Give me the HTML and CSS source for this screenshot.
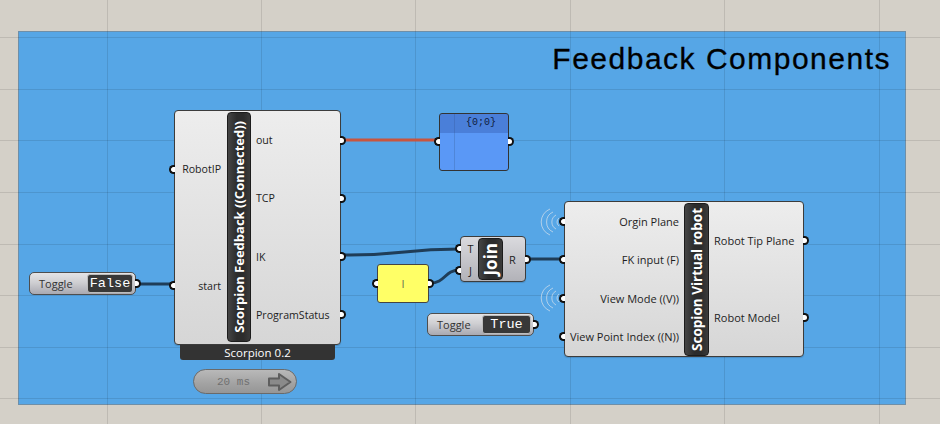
FILE: index.html
```html
<!DOCTYPE html>
<html>
<head>
<meta charset="utf-8">
<link rel="stylesheet" href="styles.css">
</head>
<body>
<div class="canvas">
  <div class="group"><div class="group-title">Feedback Components</div></div>

  <svg class="layer" width="940" height="424" viewBox="0 0 940 424">
    <g class="grid">
      <line x1="107.5" y1="0" x2="107.5" y2="424"/>
      <line x1="261.5" y1="0" x2="261.5" y2="424"/>
      <line x1="415.5" y1="0" x2="415.5" y2="424"/>
      <line x1="570.5" y1="0" x2="570.5" y2="424"/>
      <line x1="724.5" y1="0" x2="724.5" y2="424"/>
      <line x1="879.5" y1="0" x2="879.5" y2="424"/>
      <line x1="0" y1="37.5" x2="940" y2="37.5"/>
      <line x1="0" y1="89.5" x2="940" y2="89.5"/>
      <line x1="0" y1="140.5" x2="940" y2="140.5"/>
      <line x1="0" y1="192.5" x2="940" y2="192.5"/>
      <line x1="0" y1="244.5" x2="940" y2="244.5"/>
      <line x1="0" y1="295.5" x2="940" y2="295.5"/>
      <line x1="0" y1="347.5" x2="940" y2="347.5"/>
      <line x1="0" y1="398.5" x2="940" y2="398.5"/>
    </g>
    <g class="wires">
      <path class="wire red" d="M341 140 L439 140"/>
      <path class="wire" d="M137 284 L174 284"/>
      <path class="wire" d="M341 255 C400 256 400 249 460 249"/>
      <path class="wire" d="M430 283 C446 283 444 270 460 270"/>
      <path class="wire" d="M526 259 L564 259"/>
    </g>
    <g class="wireless">
      <path d="M559 218 A5 5 0 0 0 559 226"/>
      <path d="M556 215 A8 8 0 0 0 556 229"/>
      <path d="M553 212 A11 11 0 0 0 553 232"/>
      <path d="M550 209 A14 14 0 0 0 550 235"/>
      <path d="M559 294 A5 5 0 0 0 559 302"/>
      <path d="M556 291 A8 8 0 0 0 556 305"/>
      <path d="M553 288 A11 11 0 0 0 553 308"/>
      <path d="M550 285 A14 14 0 0 0 550 311"/>
    </g>
  </svg>

  <!-- Scorpion Feedback -->
  <div class="node feedback">
    <div class="comp comp-feedback">
      <div class="col inputs">
        <div class="port"><span>RobotIP</span><i class="grip"></i></div>
        <div class="port"><span>start</span><i class="grip"></i></div>
      </div>
      <div class="title"><span>Scorpion Feedback ((Connected))</span></div>
      <div class="col outputs">
        <div class="port"><span>out</span><i class="grip"></i></div>
        <div class="port"><span>TCP</span><i class="grip"></i></div>
        <div class="port"><span>IK</span><i class="grip"></i></div>
        <div class="port"><span>ProgramStatus</span><i class="grip"></i></div>
      </div>
    </div>
    <div class="footer">Scorpion 0.2</div>
  </div>

  <!-- Panel {0;0} -->
  <div class="node panel-blue">
    <div class="panel-head">{0;0}</div>
    <div class="panel-body"></div>
    <i class="grip grip-l"></i><i class="grip grip-r"></i>
  </div>

  <!-- Toggle False -->
  <div class="node toggle toggle-false">
    <span class="toggle-label">Toggle</span>
    <span class="toggle-value">False</span>
    <i class="grip grip-r"></i>
  </div>

  <!-- Yellow panel -->
  <div class="node panel-yellow">
    <span>l</span>
    <i class="grip grip-l"></i><i class="grip grip-r"></i>
  </div>

  <!-- Join -->
  <div class="node join">
    <div class="comp comp-join">
      <div class="col inputs">
        <div class="port"><span>T</span><i class="grip"></i></div>
        <div class="port"><span>J</span><i class="grip"></i></div>
      </div>
      <div class="title"><span>Join</span></div>
      <div class="col outputs">
        <div class="port"><span>R</span><i class="grip"></i></div>
      </div>
    </div>
  </div>

  <!-- Toggle True -->
  <div class="node toggle toggle-true">
    <span class="toggle-label">Toggle</span>
    <span class="toggle-value">True</span>
    <i class="grip grip-r"></i>
  </div>

  <!-- Virtual robot -->
  <div class="node robot">
    <div class="comp comp-robot">
      <div class="col inputs">
        <div class="port"><span>Orgin Plane</span><i class="grip"></i></div>
        <div class="port"><span>FK input (F)</span><i class="grip"></i></div>
        <div class="port"><span>View Mode ((V))</span><i class="grip"></i></div>
        <div class="port"><span>View Point Index ((N))</span><i class="grip"></i></div>
      </div>
      <div class="title"><span>Scopion Virtual robot</span></div>
      <div class="col outputs">
        <div class="port"><span>Robot Tip Plane</span><i class="grip"></i></div>
        <div class="port"><span>Robot Model</span><i class="grip"></i></div>
      </div>
    </div>
  </div>

  <!-- Timer -->
  <div class="node timer">
    <span class="timer-text">20 ms</span>
    <svg class="timer-arrow" width="26" height="20" viewBox="0 0 26 20">
      <path d="M2 6.5 H12 V2 L23.5 10 L12 18 V13.5 H2 Z" fill="#8a8a8a" stroke="#5e5e5e" stroke-width="2" stroke-linejoin="round"/>
    </svg>
  </div>
</div>
</body>
</html>
```

FILE: styles.css
```css
* { box-sizing: border-box; }
html, body { margin: 0; padding: 0; }
body { background: #d4d0c8; font-family: "Open Sans", "Noto Sans", sans-serif; }

.canvas {
  position: relative;
  width: 940px;
  height: 424px;
  overflow: hidden;
  background: #d4d0c8;
}

.group {
  position: absolute;
  left: 18px;
  top: 31px;
  width: 888px;
  height: 374px;
  background: #56a6e6;
  border: 1px solid #6f8fa8;
  padding: 10px 14px 0 0;
  display: flex;
  justify-content: flex-end;
  align-items: flex-start;
}
.group-title {
  font-family: "Liberation Sans", Arial, sans-serif;
  font-size: 30px;
  line-height: 34px;
  letter-spacing: 1.5px;
  color: #000;
  -webkit-text-stroke: 0.3px #000;
}

.layer { position: absolute; left: 0; top: 0; }
.grid line { stroke: rgba(0, 0, 0, 0.1); stroke-width: 1; }
.wire { fill: none; stroke: #1f3d58; stroke-width: 3; }
.wire.red { stroke: #c8553f; }
.wireless path { fill: none; stroke: rgba(215, 225, 235, 0.7); stroke-width: 1; }

.node { position: absolute; }

.grip {
  position: absolute;
  width: 6px;
  height: 9px;
  background: #fff;
  border: 2px solid #111;
  top: 50%;
  margin-top: -4.5px;
  z-index: 2;
}
.inputs .grip, .grip-l {
  left: -6px;
  border-right: 0;
  border-radius: 5px 0 0 5px;
}
.outputs .grip, .grip-r {
  right: -6px;
  border-left: 0;
  border-radius: 0 5px 5px 0;
}

/* Components */
.comp {
  display: grid;
  border: 1px solid #3c3c3c;
  border-radius: 4px;
  background: linear-gradient(#ededed, #d6d6d6);
  box-shadow: 0 1px 1px rgba(0, 0, 0, 0.15);
  font-size: 10.8px;
  color: #1e1e1e;
}
.col { display: flex; flex-direction: column; }
.port {
  flex: 1;
  display: flex;
  align-items: center;
  position: relative;
  white-space: nowrap;
}
.inputs .port { justify-content: flex-end; padding-right: 5px; }
.outputs .port { padding-left: 5px; }

.title {
  background: linear-gradient(90deg, #454545, #2c2c2c 40%, #2c2c2c 70%, #3a3a3a);
  border: 1px solid #1c1c1c;
  border-radius: 4px;
  display: flex;
  align-items: center;
  justify-content: center;
  overflow: hidden;
}
.title span {
  writing-mode: vertical-rl;
  transform: rotate(180deg);
  color: #fff;
  font-weight: 700;
  white-space: nowrap;
}

.feedback { left: 174px; top: 110px; width: 167px; }
.comp-feedback {
  height: 235px;
  grid-template-columns: 52px 24px 1fr;
  font-size: 10.6px;
}
.comp-feedback .title { margin: 1px 0 2px; }
.comp-feedback .title span { font-size: 13px; }
.comp-feedback .inputs .port { padding-right: 6px; }

.footer {
  margin: 0 6px;
  height: 15px;
  background: #333;
  color: #fff;
  font-size: 11.5px;
  line-height: 15px;
  text-align: center;
  border-radius: 0 0 3px 3px;
}

.robot { left: 564px; top: 201px; }
.comp-robot {
  width: 240px;
  height: 156px;
  grid-template-columns: 119px 25px 1fr;
  font-size: 11px;
}
.comp-robot .title { margin: 1px 0 0; }
.comp-robot .title span { font-size: 13.5px; }

.join { left: 460px; top: 236px; }
.comp-join {
  width: 66px;
  height: 46px;
  grid-template-columns: 17px 25px 1fr;
  background: linear-gradient(#dadade, #b2b2b8);
  font-size: 11px;
}
.comp-join .title { margin: 1px 0; }
.comp-join .title span { font-size: 17px; line-height: 1; }
.comp-join .inputs .port { justify-content: center; padding: 0 0 0 2px; }
.comp-join .outputs .port { padding-left: 6px; }

/* Panels */
.panel-blue {
  left: 439px;
  top: 113px;
  width: 70px;
  height: 58px;
  border: 1px solid #333;
  border-radius: 3px;
  display: flex;
  flex-direction: column;
  background: linear-gradient(90deg, transparent 14px, rgba(0,0,0,0.12) 14px, rgba(0,0,0,0.12) 15px, transparent 15px), #5a98f6;
}
.panel-head {
  height: 19px;
  background: rgba(40, 70, 150, 0.3);
  font-family: "Liberation Mono", monospace;
  font-size: 10px;
  line-height: 17px;
  color: #10203c;
  padding-left: 26px;
}
.panel-body { flex: 1; }
.panel-blue .grip { top: 27px; }

.panel-yellow {
  left: 377px;
  top: 264px;
  width: 52px;
  height: 39px;
  background: #ffff66;
  border: 1px solid #444;
  border-radius: 3px;
  display: flex;
  align-items: center;
  justify-content: center;
  font-size: 10px;
  color: #555;
}

/* Toggles */
.toggle {
  height: 23px;
  width: 107px;
  display: flex;
  align-items: stretch;
  border: 1px solid #4e4e4e;
  border-radius: 5px;
  background: linear-gradient(#e4e4e6 0%, #cfcfd2 45%, #a9a9b1 100%);
  padding: 1px 2px 1px 0;
}
.toggle-false { left: 29px; top: 272px; }
.toggle-true { left: 427px; top: 313px; }
.toggle-label {
  flex: 1;
  font-size: 11px;
  color: #333;
  display: flex;
  align-items: center;
  padding-left: 9px;
}
.toggle-value {
  width: 46px;
  background: #383838;
  border: 1px solid #bdbdbd;
  border-radius: 3px;
  color: #fff;
  font-family: "Liberation Mono", monospace;
  font-size: 13.5px;
  line-height: 17px;
  text-align: center;
}
.toggle-true .toggle-value { width: 49px; }

/* Timer */
.timer {
  left: 193px;
  top: 369px;
  width: 104px;
  height: 25px;
  border-radius: 13px;
  border: 1px solid #6a6a6a;
  background: linear-gradient(#b9b9b9, #a2a2a2 60%, #969696);
  display: flex;
  align-items: center;
  padding: 0 3px 0 23px;
}
.timer-text {
  flex: 1;
  font-family: "Liberation Mono", monospace;
  font-size: 11px;
  color: #707070;
}
.timer-arrow { display: block; }
```
